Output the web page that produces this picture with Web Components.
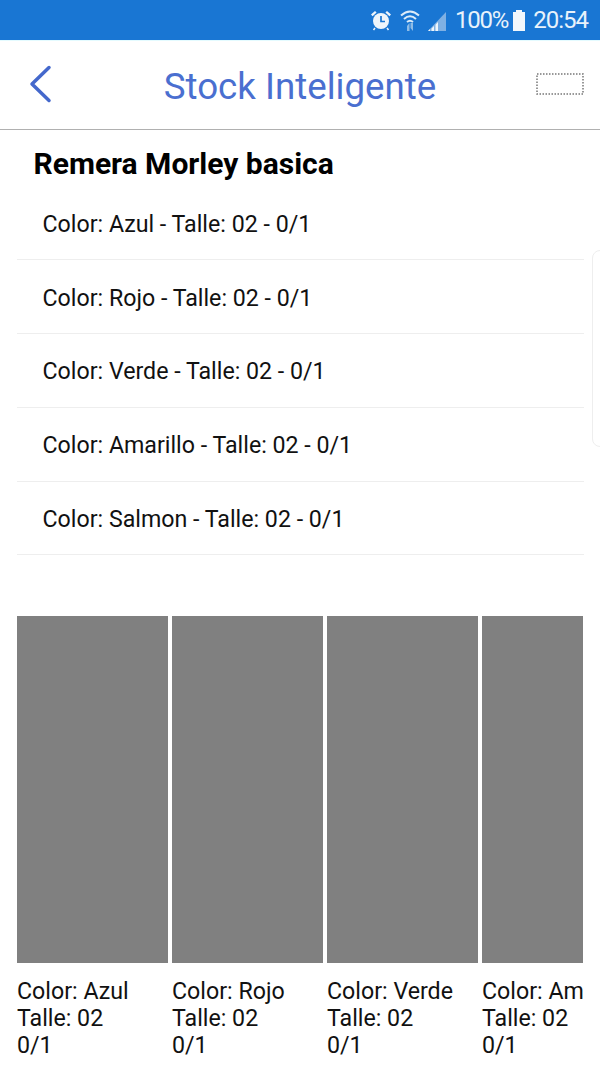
<!DOCTYPE html>
<html><head><meta charset="utf-8"><style>
html,body{margin:0;padding:0;background:#fff}
body{width:600px;height:1067px;overflow:hidden;font-family:Roboto,sans-serif;position:relative}
</style></head><body>
<app-status></app-status>
<app-nav title-text="Stock Inteligente"></app-nav>
<app-content>
<h-title>Remera Morley basica</h-title>
<stock-row>Color: Azul - Talle: 02 - 0/1</stock-row>
<stock-row>Color: Rojo - Talle: 02 - 0/1</stock-row>
<stock-row>Color: Verde - Talle: 02 - 0/1</stock-row>
<stock-row>Color: Amarillo - Talle: 02 - 0/1</stock-row>
<stock-row>Color: Salmon - Talle: 02 - 0/1</stock-row>
<card-strip>
<stock-card><span>Color: Azul</span><span>Talle: 02</span><span>0/1</span></stock-card>
<stock-card><span>Color: Rojo</span><span>Talle: 02</span><span>0/1</span></stock-card>
<stock-card><span>Color: Verde</span><span>Talle: 02</span><span>0/1</span></stock-card>
<stock-card><span>Color: Amarillo</span><span>Talle: 02</span><span>0/1</span></stock-card>
</card-strip>
</app-content>
<edge-handle></edge-handle>
<script>
function def(name,html){customElements.define(name,class extends HTMLElement{constructor(){super();this.attachShadow({mode:'open'}).innerHTML=html;}});}
def('app-status',`<style>:host{display:flex;height:40px;box-sizing:border-box;background:#1976d3;color:#e8f2fb;align-items:center;justify-content:flex-end;padding:0 12px 0 0;font:24px Roboto,sans-serif}
svg{display:block}</style>
<svg width="22" height="22" viewBox="0 0 22 22" style="margin-right:8px"><circle cx="11" cy="12" r="8" fill="#eef5fb"/><path d="M11 7v5.500h4" fill="none" stroke="#1976d3" stroke-width="1.700"/><path d="M1 5.500 5 2l1.600 1.600-4 3.600zM21 5.500 17 2l-1.600 1.600 4 3.600z" fill="#eef5fb"/><path d="M5 19l-1.500 2M17 19l1.500 2" stroke="#eef5fb" stroke-width="1.500"/></svg>
<svg width="20" height="24" viewBox="0 0 20 24" style="margin-right:5px"><g fill="none" stroke="#dcebf8" stroke-width="2"><path d="M1 7.500Q10 -.5 19 7.500"/><path d="M4 11Q10 5.500 16 11"/><path d="M7 14Q10 11.500 13 14"/></g><path d="M7 18l2.500-3v8H7zM13 23l-2.500-3v-5H13z" fill="#8fbce6"/></svg>
<svg width="22" height="24" viewBox="0 0 22 24"><path d="M21 4v19H3z" fill="#7fb0e3"/><path d="M3 23h2v-2zM6.500 23h2.500v-5l-2.500 2.600zM10.500 23H13v-9l-2.500 2.700z" fill="#eef5fb"/></svg>
<span style="margin-left:8px;letter-spacing:-1.200px">100%</span>
<svg width="14" height="24" viewBox="0 0 14 24" style="margin-left:4px"><path d="M4 2h6v2h3v19H1V4h3z" fill="#f2f7fc"/></svg>
<span style="margin-left:7px;letter-spacing:-1px">20:54</span>`);
customElements.define('app-nav',class extends HTMLElement{constructor(){super();this.attachShadow({mode:'open'}).innerHTML=`<style>:host{display:flex;height:90px;box-sizing:border-box;background:#fff;border-top:1px solid #e4fbff;border-bottom:1px solid #b0b0b0;align-items:center;justify-content:space-between;padding:0 16px 0 28px;position:relative;font:36.700px Roboto,sans-serif;color:#4a6fd0}
.title{position:absolute;left:0;right:0;text-align:center;top:25px;line-height:42px}
svg{display:block}</style>
<svg width="24" height="38" viewBox="0 0 24 38" style="margin-top:-2px"><path d="M21 2.500 4 19 21 35.500" fill="none" stroke="#4468cc" stroke-width="3.500" stroke-linecap="round" stroke-linejoin="round"/></svg>
<div class="title">${this.getAttribute('title-text')}</div>
<svg width="48" height="22" viewBox="0 0 48 22" style="margin-top:-3px"><rect x="1" y="1" width="46" height="20" fill="none" stroke="#777" stroke-width="1.500" stroke-dasharray="1.500 1.500"/></svg>`;}});
def('app-content',`<style>:host{display:block;padding:18px 16px 0 17px}</style><slot></slot>`);
def('h-title',`<style>:host{display:block;font:700 30px/32px Roboto,sans-serif;color:#000;padding-left:16.500px;height:38.400px}</style><slot></slot>`);
def('stock-row',`<style>:host{display:flex;align-items:center;height:73.800px;box-sizing:border-box;border-bottom:1px solid #eee;padding:2px 0 0 25.500px;font:23.200px/30px Roboto,sans-serif;color:#111}</style><slot></slot>`);
def('card-strip',`<style>:host{display:flex;gap:4px;overflow:hidden;margin-top:61px;width:566px}</style><slot></slot>`);
def('stock-card',`<style>:host{flex:0 0 151px;display:block;font:23.200px/27px Roboto,sans-serif;color:#111}
.img{height:347px;background:#808080;margin-bottom:15px}
.c{white-space:nowrap;display:flex;flex-direction:column}</style><div class="img"></div><div class="c"><slot></slot></div>`);
def('edge-handle',`<style>:host{position:absolute;left:592px;top:250px;width:20px;height:197px;box-sizing:border-box;border:1px solid #eee;border-radius:8px;background:#fff}</style>`);
</script>
</body></html>
